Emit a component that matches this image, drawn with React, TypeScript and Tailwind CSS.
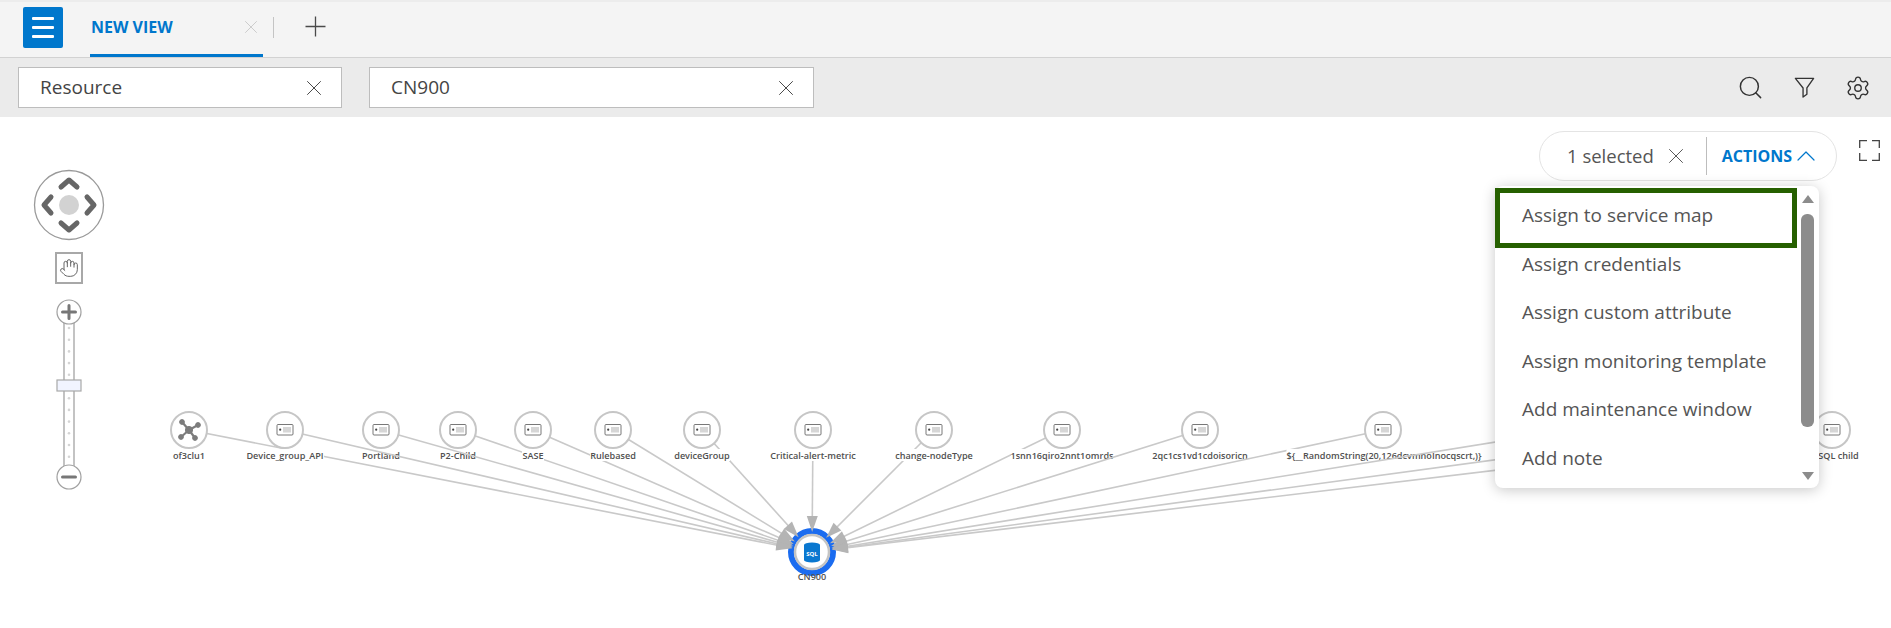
import React from "react";
import { Search, Settings, X, Hand, ChevronUp } from "lucide-react";

const HUB = { x: 812, y: 552 };
type N = { x: number; label?: string; w?: number; lx?: number; cluster?: boolean };
const nodes: N[] = [
  { x: 189, label: "of3clu1", w: 32 },
  { x: 458, label: "P2-Child", w: 43 },
  { x: 381, label: "Portland", w: 38 },
  { x: 285, label: "Device_group_API", w: 78 },
  { x: 533, label: "SASE", w: 22 },
  { x: 613, label: "Rulebased", w: 46 },
  { x: 702, label: "deviceGroup", w: 56 },
  { x: 813, label: "Critical-alert-metric", w: 88 },
  { x: 934, label: "change-nodeType", w: 78 },
  { x: 1062, label: "1snn16qiro2nnt1omrds", w: 102 },
  { x: 1200, label: "2qc1cs1vd1cdoisoricn", w: 95 },
  { x: 1383, label: "${__RandomString(20,126dcvmnoInocqscrt,)}", w: 195, lx: 1384 },
  { x: 1570 },
  { x: 1716 },
  { x: 1832, label: "SQL child", w: 40, lx: 1838.5 },
].map((n) => ({ ...n, cluster: n.label === "of3clu1" }));

function Arrow({ x }: { x: number }) {
  const a = Math.atan2(430 - HUB.y, x - HUB.x);
  const c = Math.cos(a);
  const s = Math.sin(a);
  const tip = [HUB.x + 20 * c, HUB.y + 20 * s];
  const base = [HUB.x + 36 * c, HUB.y + 36 * s];
  const p1 = [base[0] - 5.5 * s, base[1] + 5.5 * c];
  const p2 = [base[0] + 5.5 * s, base[1] - 5.5 * c];
  return <polygon points={`${tip[0]},${tip[1]} ${p1[0]},${p1[1]} ${p2[0]},${p2[1]}`} fill="#b4b4b4" />;
}

function CardIcon({ x }: { x: number }) {
  return (
    <g>
      <rect x={x - 8} y={424.5} width={16} height={10.5} rx={1} fill="#fff" stroke="#555" strokeWidth={0.8} />
      <circle cx={x - 4.8} cy={429.7} r={1.1} fill="#444" />
      <rect x={x - 2} y={427} width={8} height={5.5} fill="#d6d6d6" />
    </g>
  );
}

function ClusterIcon({ x }: { x: number }) {
  const pts = [[-7, -8], [9, -5], [-8, 7], [6, 8]];
  return (
    <g stroke="#7c7c7c" fill="#7c7c7c">
      {pts.map(([a, b], i) => (
        <g key={i}>
          <line x1={x} y1={430} x2={x + a} y2={430 + b} strokeWidth={2.2} />
          <circle cx={x + a} cy={430 + b} r={2.4} />
        </g>
      ))}
      <circle cx={x} cy={430} r={3.6} />
    </g>
  );
}

function Diagram() {
  return (
    <svg className="absolute left-0 top-0" width={1891} height={511} viewBox="0 117 1891 511">
      {nodes.map((n, i) => {
        const cx = n.lx ?? n.x;
        return (
          <g key={i}>
            <line x1={n.x} y1={430} x2={HUB.x} y2={HUB.y} stroke="#c9c9c9" strokeWidth={1.6} />
            <circle cx={n.x} cy={430} r={18} fill="#fff" stroke="#c6c6c6" strokeWidth={2} />
            {n.cluster ? <ClusterIcon x={n.x} /> : <CardIcon x={n.x} />}
            {n.label && (
              <>
                <rect x={cx - (n.w ?? 0) / 2} y={449} width={n.w} height={12} fill="#fff" />
                <text x={cx} y={458.5} textAnchor="middle" fontFamily="'Open Sans', sans-serif" fontSize={9.1} fontWeight={600} fill="#505050">
                  {n.label}
                </text>
              </>
            )}
          </g>
        );
      })}
      <circle cx={HUB.x} cy={HUB.y} r={21} fill="#fff" stroke="#1b6cf0" strokeWidth={6} />
      <circle cx={HUB.x} cy={HUB.y} r={17} fill="#fff" stroke="#c4c4c4" strokeWidth={2.5} />
      {nodes.map((n, i) => (
        <Arrow key={i} x={n.x} />
      ))}
      <path d="M804 545 a8 2.6 0 0 1 16 0 v15 a8 2.6 0 0 1 -16 0 z" fill="#0a78d0" />
      <text x={HUB.x} y={556} textAnchor="middle" fontFamily="'Open Sans', sans-serif" fontSize={6} fontWeight={700} fill="#fff">
        SQL
      </text>
      <text x={HUB.x} y={580} textAnchor="middle" fontFamily="'Open Sans', sans-serif" fontSize={9.1} fontWeight={600} fill="#505050">
        CN900
      </text>
    </svg>
  );
}

function Navigator() {
  return (
    <div className="absolute left-[33px] top-[52px] flex w-[72px] flex-col items-center">
      <svg width={72} height={72} viewBox="0 0 72 72">
        <circle cx={36} cy={36} r={34.5} fill="#fff" stroke="#9a9a9a" strokeWidth={1.3} />
        <circle cx={36} cy={36} r={10} fill="#d2d2d2" />
        <g fill="none" stroke="#666" strokeWidth={5} strokeLinecap="round" strokeLinejoin="round">
          <path d="M28 18 L36 11 L44 18" />
          <path d="M28 54 L36 61 L44 54" />
          <path d="M18 28 L11 36 L18 44" />
          <path d="M54 28 L61 36 L54 44" />
        </g>
      </svg>
      <div className="mt-[11px] flex h-[32px] w-[28px] items-center justify-center border-2 border-[#a8a8a8]">
        <Hand size={20} strokeWidth={1.2} color="#666" />
      </div>
      <svg className="mt-[14px]" width={30} height={194} viewBox="0 0 30 194">
        <rect x={10} y={20} width={10} height={154} fill="#fff" stroke="#b4b4b4" strokeWidth={1.6} />
        {[0, 1, 2, 3, 4, 6, 7, 8, 9, 10, 11].map((i) => (
          <circle key={i} cx={15} cy={30 + i * 11.7} r={1.3} fill="#d4d4d4" />
        ))}
        <rect x={3} y={82} width={24} height={11} fill="#f1f4ff" stroke="#a8a8a8" strokeWidth={1.2} />
        <circle cx={15} cy={14} r={12} fill="#fff" stroke="#a0a0a0" strokeWidth={1.2} />
        <path d="M8.5 14 H21.5 M15 7.5 V20.5" stroke="#777" strokeWidth={3} strokeLinecap="round" />
        <circle cx={15} cy={179} r={12} fill="#fff" stroke="#a0a0a0" strokeWidth={1.2} />
        <path d="M8.5 179 H21.5" stroke="#777" strokeWidth={3} strokeLinecap="round" />
      </svg>
    </div>
  );
}

const items = [
  "Assign to service map",
  "Assign credentials",
  "Assign custom attribute",
  "Assign monitoring template",
  "Add maintenance window",
  "Add note",
];

function ActionsMenu() {
  return (
    <div className="absolute left-[1495px] top-[69px] h-[302px] w-[324px] rounded-[8px] bg-white pt-[5px] shadow-[0_2px_14px_rgba(0,0,0,0.22)]">
      {items.map((t) => (
        <div key={t} className="flex h-[48.6px] items-center pl-[27px] text-[19px] text-[#555]">
          {t}
        </div>
      ))}
      <div className="absolute left-0 top-[2px] h-[60px] w-[302px] border-[5px] border-[#266000]" />
      <div className="absolute right-[5px] top-[9px] flex h-[285px] w-[13px] flex-col items-center">
        <div className="h-0 w-0 border-x-[6px] border-b-[8px] border-x-transparent border-b-[#8c8c8c]" />
        <div className="mt-[11px] h-[213px] w-[13px] rounded-[6px] bg-[#8c8c8c]" />
        <div className="mt-auto h-0 w-0 border-x-[6px] border-t-[8px] border-x-transparent border-t-[#8c8c8c]" />
      </div>
    </div>
  );
}

function FilterChip({ text, width }: { text: string; width: string }) {
  return (
    <div className={`flex h-[41px] items-center justify-between border border-[#bdbdbd] bg-white pl-[21px] pr-[14px] text-[19px] text-[#444] ${width}`}>
      <span>{text}</span>
      <X size={26} strokeWidth={0.9} color="#444" />
    </div>
  );
}

export default function App() {
  return (
    <div className="flex h-[628px] w-[1891px] flex-col overflow-hidden bg-white font-['Open_Sans',sans-serif]">
      <header className="flex h-[58px] shrink-0 items-start border-b border-t-2 border-b-[#d2d2d2] border-t-[#ececec] bg-[#f4f4f4]">
        <div className="ml-[23px] mt-[5px] flex h-[41px] w-[40px] flex-col items-center justify-center gap-[6px] rounded-[2px] bg-[#0077cc]">
          <span className="h-[3px] w-[22px] rounded-[1px] bg-white" />
          <span className="h-[3px] w-[22px] rounded-[1px] bg-white" />
          <span className="h-[3px] w-[22px] rounded-[1px] bg-white" />
        </div>
        <div className="relative ml-[27px] flex h-[55px] w-[173px] items-center border-b-[3px] border-[#0077cc] pb-[3px] pl-[1px] text-[16px] font-bold text-[#0077cc]">
          NEW VIEW
          <X size={22} strokeWidth={0.9} color="#c4c4c4" className="absolute left-[150px] top-[14px]" />
        </div>
        <div className="ml-[10px] mt-[15px] h-[21px] w-px bg-[#c4c4c4]" />
        <svg className="ml-[31px] mt-[14px]" width={21} height={21} viewBox="0 0 21 21">
          <path d="M0.5 10.5 H20.5 M10.5 0.5 V20.5" stroke="#4a4a4a" strokeWidth={1.3} />
        </svg>
      </header>
      <div className="flex h-[59px] shrink-0 items-center gap-[27px] bg-[#ebebeb] pl-[18px]">
        <FilterChip text="Resource" width="w-[324px]" />
        <FilterChip text="CN900" width="w-[445px]" />
        <div className="ml-auto mr-[20px] flex items-center">
          <Search size={27} strokeWidth={1.3} color="#333" />
          <svg className="ml-[29px]" width={23} height={23} viewBox="0 0 24 24" fill="none" stroke="#333" strokeWidth={1.4} strokeLinejoin="round">
            <path d="M2.5 2.5 H21.5 L14.5 12.5 V19 L10.5 22 V12.5 Z" />
          </svg>
          <Settings className="ml-[29px]" size={26} strokeWidth={1.25} color="#333" />
        </div>
      </div>
      <main className="relative flex-1">
        <Diagram />
        <Navigator />
        <div className="absolute left-[1539px] top-[14px] flex h-[50px] w-[298px] items-center rounded-[25px] border border-[#e4e4e4] bg-white pl-[27px] text-[#555]">
          <span className="text-[18.5px]">1 selected</span>
          <X size={26} strokeWidth={0.9} color="#555" className="ml-[9px]" />
          <span className="ml-[17px] h-[38px] w-px bg-[#bdbdbd]" />
          <span className="ml-[15px] text-[16px] font-bold text-[#0077cc]">ACTIONS</span>
          <ChevronUp size={32} strokeWidth={0.9} color="#0077cc" className="-ml-[2px]" />
        </div>
        <svg className="absolute left-[1859px] top-[23px]" width={21} height={21} viewBox="0 0 21 21" fill="none" stroke="#444" strokeWidth={1.3}>
          <path d="M0.7 8 V0.7 H8 M13 0.7 H20.3 V8 M0.7 13 V20.3 H8 M13 20.3 H20.3 V13" />
        </svg>
        <ActionsMenu />
      </main>
    </div>
  );
}
